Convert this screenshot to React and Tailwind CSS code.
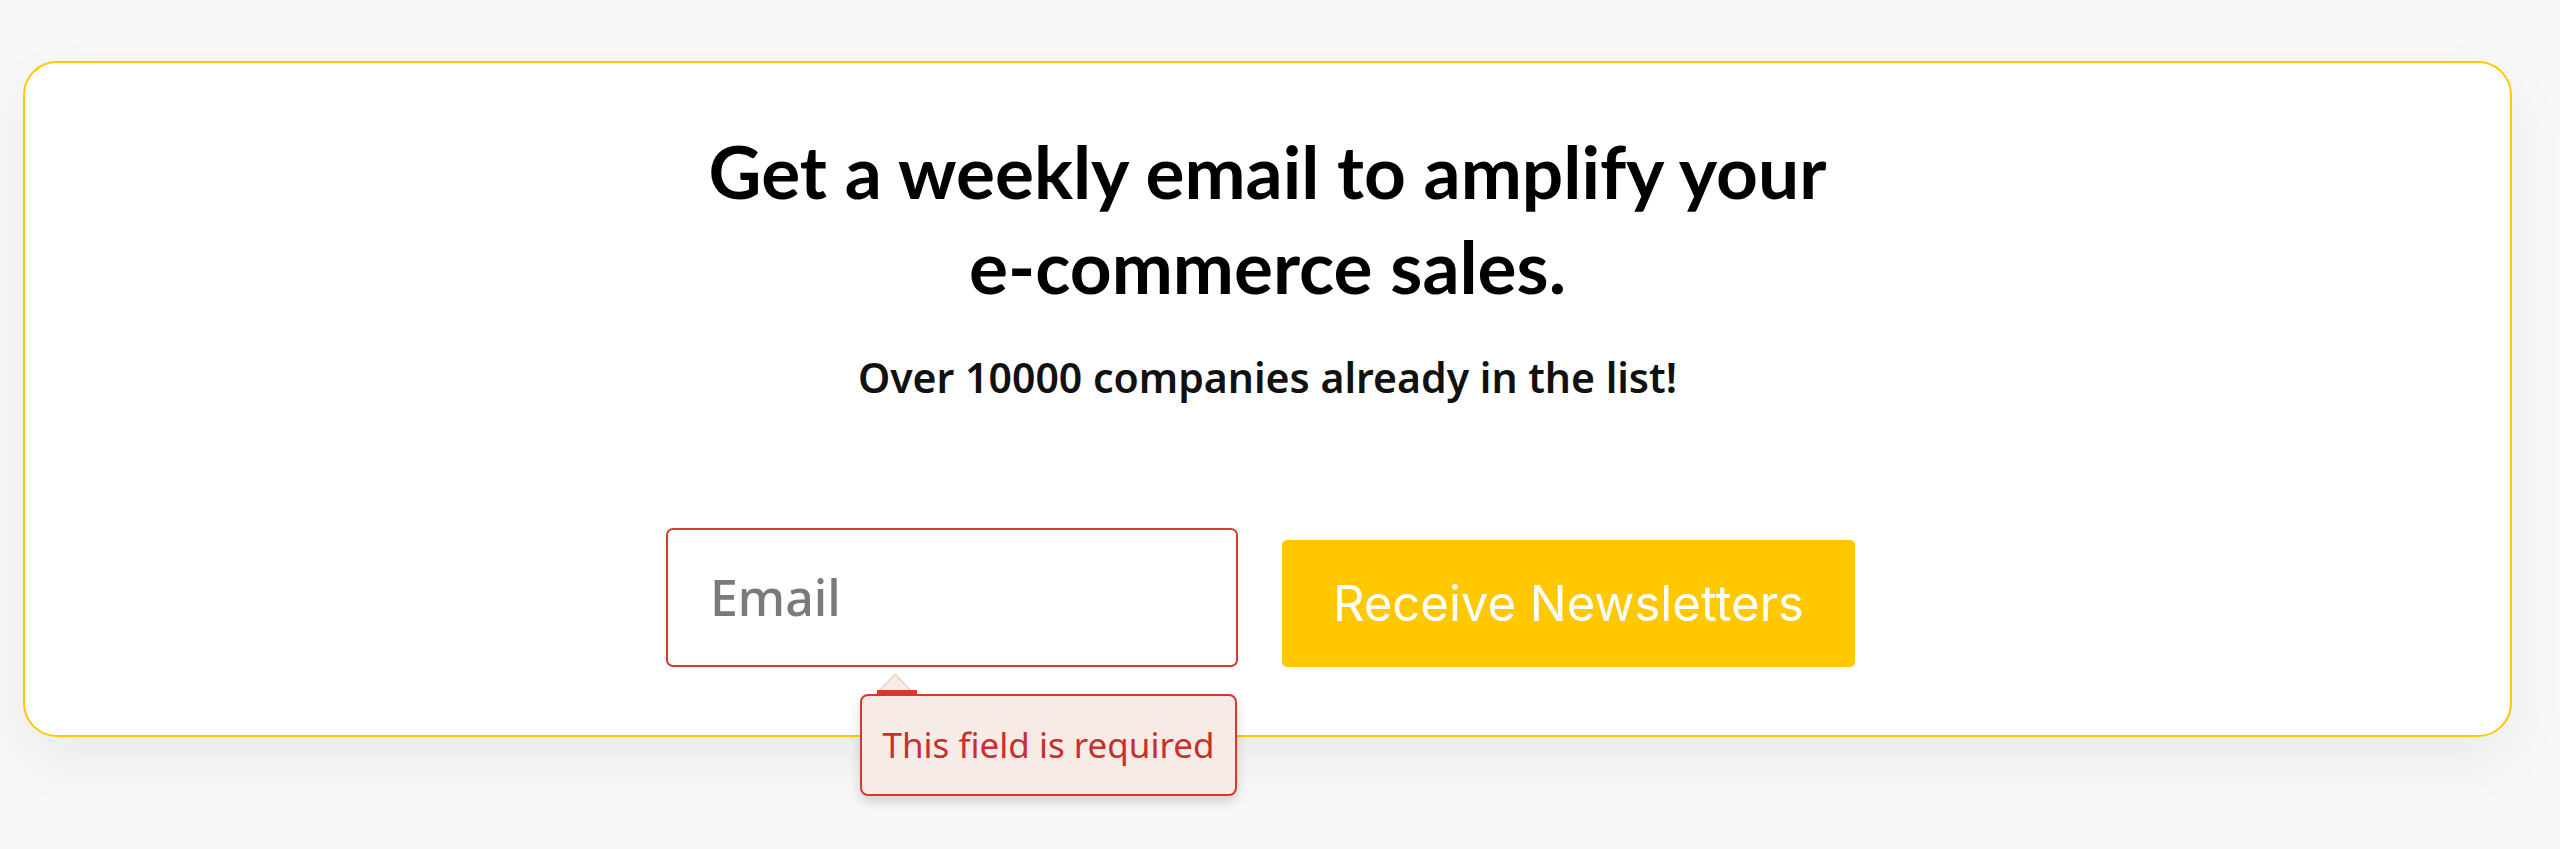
export default function App() {
  return (
    <div className="min-h-[849px] w-full bg-[#f8f8f8] pl-[23px] pr-[48px] pt-[61px] pb-[40px]">
      <div className="flex flex-col items-center rounded-[34px] border-2 border-[#ffc800] bg-white pt-[61px] pb-[68px] shadow-[0_24px_60px_rgba(0,0,0,0.06)]">
        <h1 className="text-center font-['Lato',sans-serif] text-[73px] font-bold leading-[95px] text-black">
          Get a weekly email to amplify your
          <br />
          e-commerce sales.
        </h1>
        <p className="mt-[39px] text-center font-['Noto_Sans',sans-serif] text-[41px] font-semibold leading-[48px] text-[#111]">
          Over 10000 companies already in the list!
        </p>
        <div className="mt-[127px] flex items-end gap-[44px] pr-[14px]">
          <div className="relative">
            <div className="flex h-[139px] w-[572px] items-center rounded-[7px] border-2 border-[#d43d2b] bg-white pl-[42px]">
              <span className="font-['Noto_Sans',sans-serif] text-[50px] font-medium text-[#7a7a7a]">
                Email
              </span>
            </div>
            <div className="absolute left-[194px] top-[166px] z-10">
              <div className="absolute left-[15px] top-[-21px] h-0 w-0 border-x-[20px] border-b-[21px] border-x-transparent border-b-[#f1cfc8]"></div>
              <div className="absolute left-[17px] top-[-19px] h-0 w-0 border-x-[18px] border-b-[19px] border-x-transparent border-b-[#f7ebe8]"></div>
              <div className="absolute left-[17px] top-[-4px] h-[5px] w-[40px] bg-[#d23b2a]"></div>
              <div className="flex h-[102px] w-[377px] items-center justify-center rounded-[8px] border-2 border-[#d23b2a] bg-[#f7ebe8] shadow-[0_6px_12px_rgba(0,0,0,0.15)]">
                <span className="font-['Noto_Sans',sans-serif] text-[35px] text-[#c8302b]">
                  This field is required
                </span>
              </div>
            </div>
          </div>
          <button className="flex h-[127px] w-[573px] items-center justify-center rounded-[5px] bg-[#ffc800]">
            <span className="font-['Inter',sans-serif] text-[49px] font-normal text-white">
              Receive Newsletters
            </span>
          </button>
        </div>
      </div>
    </div>
  );
}
